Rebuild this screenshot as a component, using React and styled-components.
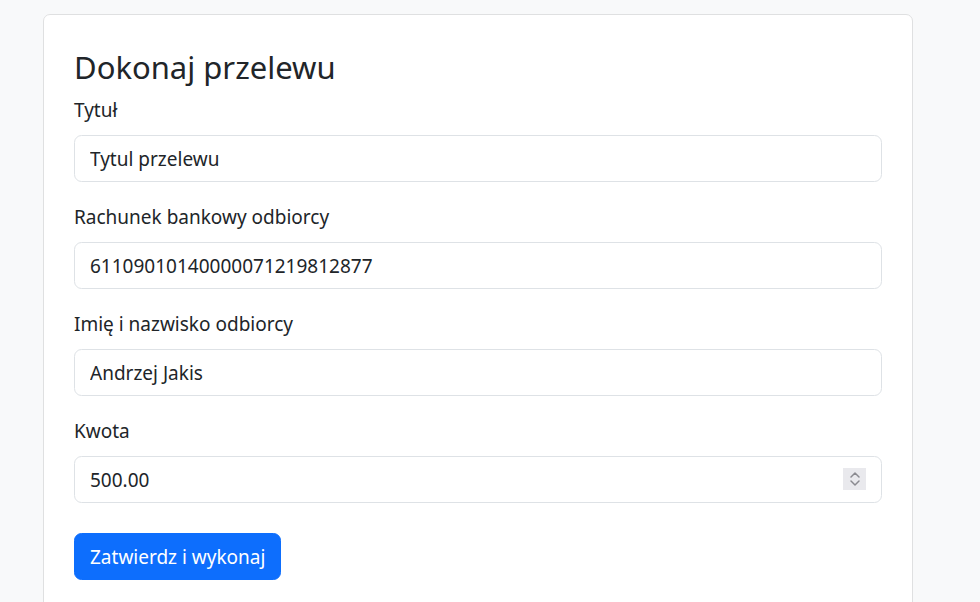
import React from "react";
import styled, { createGlobalStyle } from "styled-components";

const Global = createGlobalStyle`
  html, body { margin: 0; padding: 0; }
  body {
    background: #f8f9fa;
    font-family: "Noto Sans", "Open Sans", sans-serif;
    color: #212529;
    font-size: 20px;
    line-height: 1.5;
  }
  * { box-sizing: border-box; }
`;

const Page = styled.div`
  padding: 14px 0 0 43px;
  height: 602px;
  overflow: hidden;
`;

const Card = styled.div`
  width: 870px;
  min-height: 640px;
  background: #fff;
  border: 1px solid #dfe0e1;
  border-radius: 7px;
  padding: 30px 30px;
`;

const Title = styled.h3`
  margin: 2px 0 8px;
  font-size: 31px;
  font-weight: 400;
  line-height: 40px;
  color: #212529;
`;

const Group = styled.div`
  margin-bottom: ${(p) => (p.$last ? "30px" : "20px")};
`;

const Label = styled.label`
  display: block;
  margin-bottom: 10px;
  font-size: 19px;
  line-height: 30px;
`;

const InputWrap = styled.div`
  position: relative;
`;

const Input = styled.input`
  display: block;
  width: 100%;
  height: 47px;
  padding: 7.5px 15px;
  font-family: inherit;
  font-size: 19px;
  line-height: 30px;
  color: #212529;
  background: #fff;
  border: 1px solid #dee2e6;
  border-radius: 7.5px;
  outline: none;
  -moz-appearance: textfield;
  &::-webkit-inner-spin-button,
  &::-webkit-outer-spin-button {
    -webkit-appearance: none;
    margin: 0;
  }
`;

const Spinner = styled.div`
  position: absolute;
  right: 16px;
  top: 12px;
  width: 23px;
  height: 22px;
  background: #e9e9ed;
  display: flex;
  align-items: center;
  justify-content: center;
`;

const Button = styled.button`
  display: inline-block;
  height: 47px;
  padding: 7px 15px;
  font-family: inherit;
  font-size: 19px;
  line-height: 30px;
  color: #fff;
  background: #0d6efd;
  border: 1px solid #0d6efd;
  border-radius: 7.5px;
  cursor: pointer;
`;

const fields = [
  { label: "Tytuł", value: "Tytul przelewu" },
  { label: "Rachunek bankowy odbiorcy", value: "61109010140000071219812877" },
  { label: "Imię i nazwisko odbiorcy", value: "Andrzej Jakis" },
];

export default function App() {
  return (
    <>
      <Global />
      <Page>
        <Card>
          <Title>Dokonaj przelewu</Title>
          {fields.map((f) => (
            <Group key={f.label}>
              <Label>{f.label}</Label>
              <Input type="text" defaultValue={f.value} />
            </Group>
          ))}
          <Group $last>
            <Label>Kwota</Label>
            <InputWrap>
              <Input type="number" defaultValue="500.00" step="0.01" />
              <Spinner>
                <svg width="12" height="16" viewBox="0 0 12 16" fill="none" stroke="#8a8a90" strokeWidth="1.5" strokeLinecap="round" strokeLinejoin="round">
                  <path d="M2 6 L6 2 L10 6" />
                  <path d="M2 10 L6 14 L10 10" />
                </svg>
              </Spinner>
            </InputWrap>
          </Group>
          <Button type="button">Zatwierdz i wykonaj</Button>
        </Card>
      </Page>
    </>
  );
}
